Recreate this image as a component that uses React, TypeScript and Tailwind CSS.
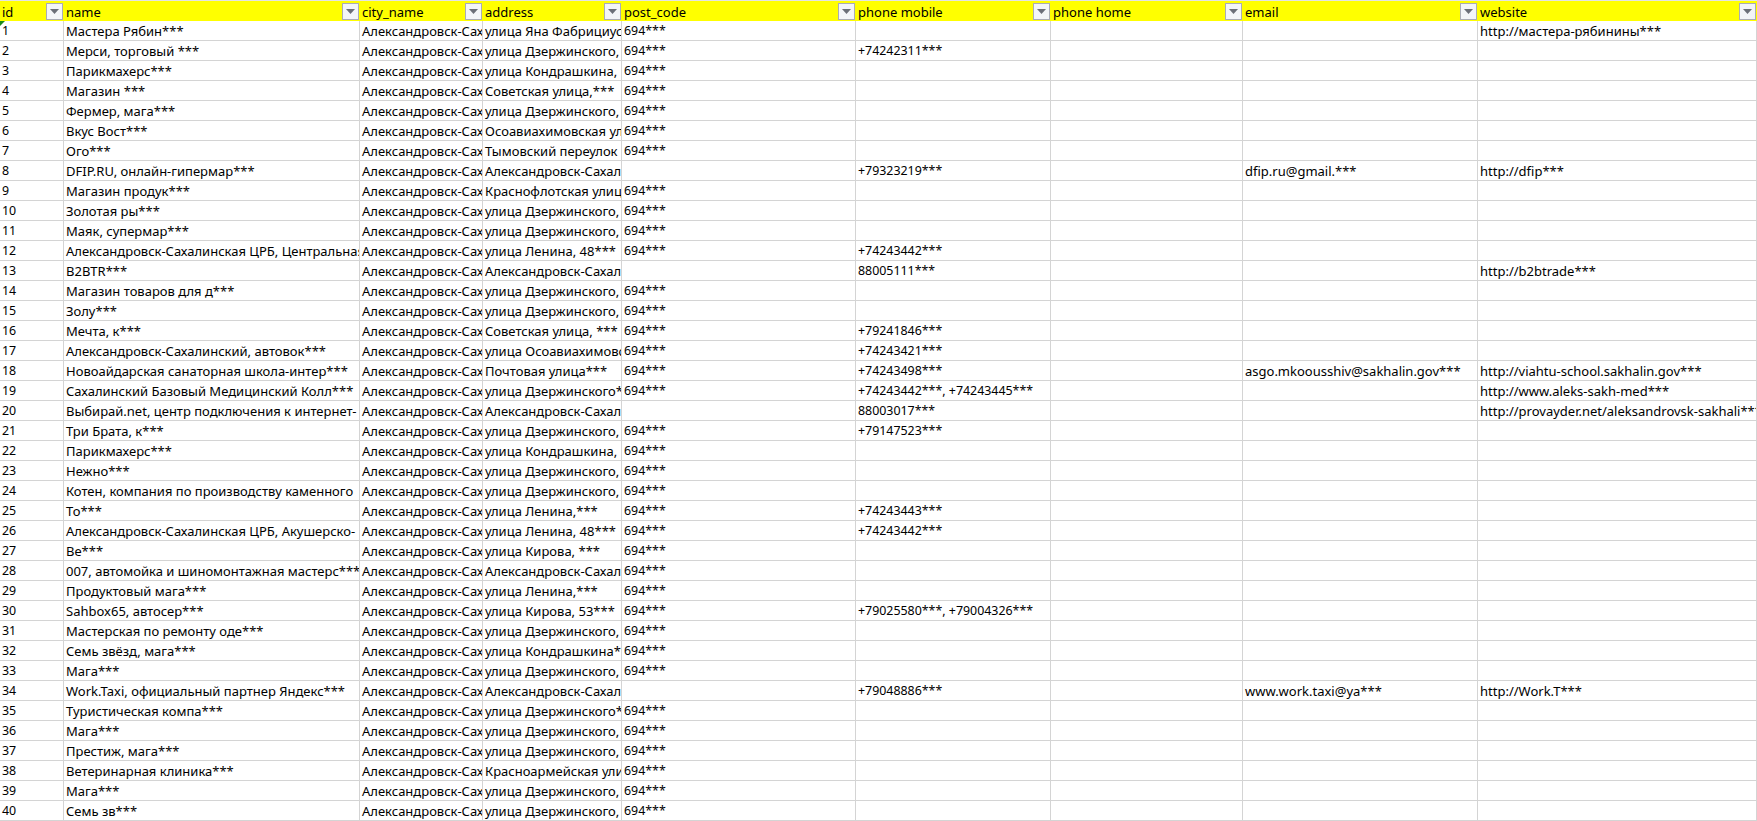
const columns = [
  { label: 'id', width: 'w-[64px]' },
  { label: 'name', width: 'w-[296px]' },
  { label: 'city_name', width: 'w-[123px]' },
  { label: 'address', width: 'w-[139px]' },
  { label: 'post_code', width: 'w-[234px]' },
  { label: 'phone mobile', width: 'w-[195px]' },
  { label: 'phone home', width: 'w-[192px]' },
  { label: 'email', width: 'w-[235px]' },
  { label: 'website', width: 'w-[279px]' },
]

const CITY = 'Александровск-Сахалинский***'
const POST = '694***'
const DZ = 'улица Дзержинского, ***'
const AS = 'Александровск-Сахалинский***'

// name, address, post_code, phone mobile, email, website
const rows: string[][] = [
  ['Мастера Рябин***', 'улица Яна Фабрициуса, ***', POST, '', '', 'http://мастера-рябинины***'],
  ['Мерси, торговый ***', DZ, POST, '+74242311***', '', ''],
  ['Парикмахерс***', 'улица Кондрашкина, ', POST, '', '', ''],
  ['Магазин ***', 'Советская улица,***', POST, '', '', ''],
  ['Фермер, мага***', DZ, POST, '', '', ''],
  ['Вкус Вост***', 'Осоавиахимовская улица***', POST, '', '', ''],
  ['Ого***', 'Тымовский переулок', POST, '', '', ''],
  ['DFIP.RU, онлайн-гипермар***', AS, '', '+79323219***', 'dfip.ru@gmail.***', 'http://dfip***'],
  ['Магазин продук***', 'Краснофлотская улица***', POST, '', '', ''],
  ['Золотая ры***', DZ, POST, '', '', ''],
  ['Маяк, супермар***', DZ, POST, '', '', ''],
  ['Александровск-Сахалинская ЦРБ, Центральная***', 'улица Ленина, 48***', POST, '+74243442***', '', ''],
  ['B2BTR***', AS, '', '88005111***', '', 'http://b2btrade***'],
  ['Магазин товаров для д***', DZ, POST, '', '', ''],
  ['Золу***', DZ, POST, '', '', ''],
  ['Мечта, к***', 'Советская улица, ***', POST, '+79241846***', '', ''],
  ['Александровск-Сахалинский, автовок***', 'улица Осоавиахимовская***', POST, '+74243421***', '', ''],
  ['Новоайдарская санаторная школа-интер***', 'Почтовая улица***', POST, '+74243498***', 'asgo.mkoousshiv@sakhalin.gov***', 'http://viahtu-school.sakhalin.gov***'],
  ['Сахалинский Базовый Медицинский Колл***', 'улица Дзержинского***', POST, '+74243442***, +74243445***', '', 'http://www.aleks-sakh-med***'],
  ['Выбирай.net, центр подключения к интернет-', AS, '', '88003017***', '', 'http://provayder.net/aleksandrovsk-sakhali***'],
  ['Три Брата, к***', DZ, POST, '+79147523***', '', ''],
  ['Парикмахерс***', 'улица Кондрашкина, ', POST, '', '', ''],
  ['Нежно***', DZ, POST, '', '', ''],
  ['Котен, компания по производству каменного ', DZ, POST, '', '', ''],
  ['То***', 'улица Ленина,***', POST, '+74243443***', '', ''],
  ['Александровск-Сахалинская ЦРБ, Акушерско-', 'улица Ленина, 48***', POST, '+74243442***', '', ''],
  ['Ве***', 'улица Кирова, ***', POST, '', '', ''],
  ['007, автомойка и шиномонтажная мастерс***', AS, POST, '', '', ''],
  ['Продуктовый мага***', 'улица Ленина,***', POST, '', '', ''],
  ['Sahbox65, автосер***', 'улица Кирова, 53***', POST, '+79025580***, +79004326***', '', ''],
  ['Мастерская по ремонту оде***', DZ, POST, '', '', ''],
  ['Семь звёзд, мага***', 'улица Кондрашкина***', POST, '', '', ''],
  ['Мага***', DZ, POST, '', '', ''],
  ['Work.Taxi, официальный партнер Яндекс***', AS, '', '+79048886***', 'www.work.taxi@ya***', 'http://Work.T***'],
  ['Туристическая компа***', 'улица Дзержинского***', POST, '', '', ''],
  ['Мага***', DZ, POST, '', '', ''],
  ['Престиж, мага***', DZ, POST, '', '', ''],
  ['Ветеринарная клиника***', 'Красноармейская улица***', POST, '', '', ''],
  ['Мага***', DZ, POST, '', '', ''],
  ['Семь зв***', DZ, POST, '', '', ''],
]

function FilterButton() {
  return (
    <span className="flex h-[17px] w-[17px] shrink-0 items-center justify-center border border-[#a9acb6] bg-[#f3f5f8]">
      <svg width="9" height="5" viewBox="0 0 9 5">
        <path d="M0 0h9L4.5 5z" fill="#6b6f78" />
      </svg>
    </span>
  )
}

function Cell({ text, flag, numeric }: { text: string; flag?: boolean; numeric?: boolean }) {
  return (
    <td
      className={`relative h-[20px] overflow-hidden whitespace-pre border-r border-b border-[#d4d4d4] p-0 pl-[2px] pt-px align-middle ${
        numeric ? 'text-[12.4px]' : ''
      }`}
    >
      {flag && (
        <span className="absolute left-0 top-0 h-0 w-0 border-t-[5px] border-r-[5px] border-t-[#1a8a1a] border-r-transparent" />
      )}
      {text}
    </td>
  )
}

export default function App() {
  return (
    <div className="h-[821px] w-[1757px] overflow-hidden bg-white font-['Noto_Sans',sans-serif] text-[13px] leading-[18px] text-black">
      <table className="w-[1757px] table-fixed border-separate border-spacing-0">
        <thead>
          <tr>
            {columns.map((col) => (
              <th
                key={col.label}
                className={`${col.width} h-[21px] border-t border-t-[#e4e4e4] bg-[#ffff00] p-0 text-left font-normal`}
              >
                <div className="flex h-[20px] items-center justify-between pl-[2px] pr-[1px]">
                  <span className="pt-px">{col.label}</span>
                  <FilterButton />
                </div>
              </th>
            ))}
          </tr>
        </thead>
        <tbody>
          {rows.map((row, i) => (
            <tr key={i}>
              <Cell text={String(i + 1)} flag={i === 0} numeric />
              <Cell text={row[0]} />
              <Cell text={CITY} />
              <Cell text={row[1]} />
              <Cell text={row[2]} numeric />
              <Cell text={row[3]} numeric />
              <Cell text="" />
              <Cell text={row[4]} />
              <Cell text={row[5]} />
            </tr>
          ))}
        </tbody>
      </table>
    </div>
  )
}
